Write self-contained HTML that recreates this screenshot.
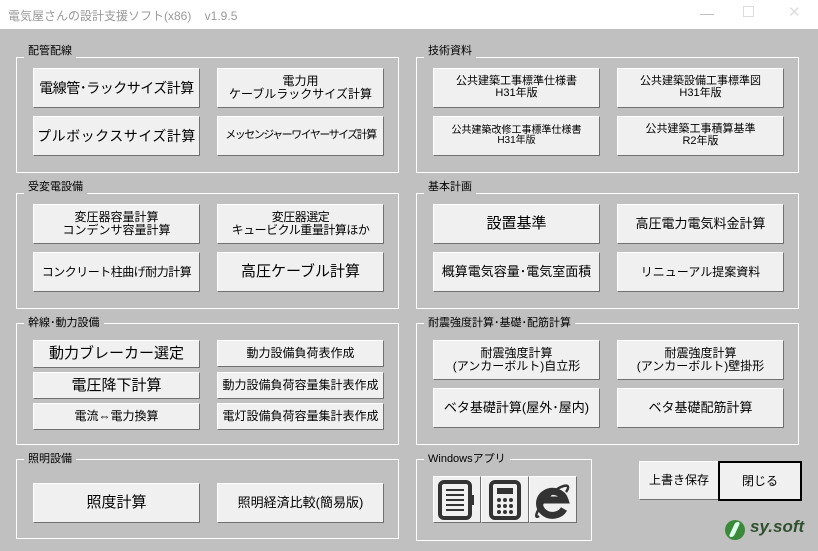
<!DOCTYPE html><html><head><meta charset="utf-8"><style>
body{margin:0;width:818px;height:551px;overflow:hidden;background:#c0c0c0;font-family:"Liberation Sans","Noto Sans CJK JP",sans-serif;position:relative}
.tb{position:absolute;left:0;top:0;width:818px;height:29px;background:#fff;color:#999;font-size:12px}
.g{position:absolute;border:1px solid #fff}
.gl{position:absolute;background:#c0c0c0;font-size:11px;padding:0 4px;color:#000;line-height:14px}
.b{position:absolute;background:#f0f0f0;border:1px solid #fff;border-right-color:#707070;border-bottom-color:#707070;box-sizing:border-box;display:flex;align-items:center;justify-content:center;text-align:center;color:#000;line-height:1.05;white-space:nowrap}
</style></head><body>
<div class="tb"><span style="position:absolute;left:8px;top:7px">電気屋さんの設計支援ソフト(x86)&nbsp;&nbsp;&nbsp;&nbsp;v1.9.5</span>
<span style="position:absolute;left:700px;top:5px;font-size:14px;color:#bbb">—</span>
<span style="position:absolute;left:743px;top:6px;width:9px;height:9px;border:1px solid #ddd"></span>
<span style="position:absolute;left:788px;top:3px;font-size:15px;color:#ddd">✕</span></div>

<div class="g" style="left:16px;top:57px;width:381px;height:114px"></div><div class="gl" style="left:24px;top:44px">配管配線</div>
<div class="b" style="left:33px;top:68px;width:167px;height:40px;font-size:14px;letter-spacing:-0.5px">電線管･ラックサイズ計算</div>
<div class="b" style="left:217px;top:68px;width:167px;height:40px;font-size:12px">電力用<br>ケーブルラックサイズ計算</div>
<div class="b" style="left:33px;top:116px;width:167px;height:40px;font-size:14px;letter-spacing:0.5px">プルボックスサイズ計算</div>
<div class="b" style="left:217px;top:116px;width:167px;height:40px;font-size:11px;letter-spacing:-1.5px">メッセンジャーワイヤーサイズ計算</div>

<div class="g" style="left:416px;top:57px;width:381px;height:114px"></div><div class="gl" style="left:424px;top:44px">技術資料</div>
<div class="b" style="left:433px;top:68px;width:167px;height:40px;font-size:11px">公共建築工事標準仕様書<br>H31年版</div>
<div class="b" style="left:617px;top:68px;width:167px;height:40px;font-size:11px">公共建築設備工事標準図<br>H31年版</div>
<div class="b" style="left:433px;top:116px;width:167px;height:40px;font-size:10px">公共建築改修工事標準仕様書<br>H31年版</div>
<div class="b" style="left:617px;top:116px;width:167px;height:40px;font-size:11px">公共建築工事積算基準<br>R2年版</div>

<div class="g" style="left:16px;top:193px;width:381px;height:114px"></div><div class="gl" style="left:24px;top:180px">受変電設備</div>
<div class="b" style="left:33px;top:204px;width:167px;height:40px;font-size:12px">変圧器容量計算<br>コンデンサ容量計算</div>
<div class="b" style="left:217px;top:204px;width:167px;height:40px;font-size:12px;letter-spacing:-0.5px">変圧器選定<br>キュービクル重量計算ほか</div>
<div class="b" style="left:33px;top:252px;width:167px;height:40px;font-size:12px;letter-spacing:-0.5px">コンクリート柱曲げ耐力計算</div>
<div class="b" style="left:217px;top:252px;width:167px;height:40px;font-size:15px">高圧ケーブル計算</div>

<div class="g" style="left:416px;top:193px;width:381px;height:114px"></div><div class="gl" style="left:424px;top:180px">基本計画</div>
<div class="b" style="left:433px;top:204px;width:167px;height:40px;font-size:15px">設置基準</div>
<div class="b" style="left:617px;top:204px;width:167px;height:40px;font-size:13px">高圧電力電気料金計算</div>
<div class="b" style="left:433px;top:252px;width:167px;height:40px;font-size:13px">概算電気容量･電気室面積</div>
<div class="b" style="left:617px;top:252px;width:167px;height:40px;font-size:12px">リニューアル提案資料</div>

<div class="g" style="left:16px;top:323px;width:381px;height:120px"></div><div class="gl" style="left:24px;top:316px">幹線･動力設備</div>
<div class="b" style="left:33px;top:340px;width:167px;height:28px;font-size:15px">動力ブレーカー選定</div>
<div class="b" style="left:33px;top:372px;width:167px;height:27px;font-size:15px">電圧降下計算</div>
<div class="b" style="left:33px;top:403px;width:167px;height:27px;font-size:12px">電流⇔電力換算</div>
<div class="b" style="left:217px;top:340px;width:167px;height:27px;font-size:12px">動力設備負荷表作成</div>
<div class="b" style="left:217px;top:372px;width:167px;height:27px;font-size:12px">動力設備負荷容量集計表作成</div>
<div class="b" style="left:217px;top:403px;width:167px;height:27px;font-size:12px">電灯設備負荷容量集計表作成</div>

<div class="g" style="left:416px;top:323px;width:381px;height:120px"></div><div class="gl" style="left:424px;top:316px">耐震強度計算･基礎･配筋計算</div>
<div class="b" style="left:433px;top:340px;width:167px;height:40px;font-size:12px">耐震強度計算<br>(アンカーボルト)自立形</div>
<div class="b" style="left:617px;top:340px;width:167px;height:40px;font-size:12px">耐震強度計算<br>(アンカーボルト)壁掛形</div>
<div class="b" style="left:433px;top:388px;width:167px;height:40px;font-size:13px">ベタ基礎計算(屋外･屋内)</div>
<div class="b" style="left:617px;top:388px;width:167px;height:40px;font-size:13px">ベタ基礎配筋計算</div>

<div class="g" style="left:16px;top:459px;width:381px;height:78px"></div><div class="gl" style="left:24px;top:452px">照明設備</div>
<div class="b" style="left:33px;top:483px;width:167px;height:40px;font-size:15px">照度計算</div>
<div class="b" style="left:217px;top:483px;width:167px;height:40px;font-size:13px">照明経済比較(簡易版)</div>

<div class="g" style="left:416px;top:459px;width:174px;height:80px"></div><div class="gl" style="left:424px;top:452px">Windowsアプリ</div>
<div class="b" style="left:433px;top:476px;width:48px;height:47px"><svg width="38" height="40" viewBox="0 0 38 40"><rect x="2" y="2" width="30" height="36" rx="4" fill="none" stroke="#333" stroke-width="4"/><rect x="32" y="15" width="4" height="10" fill="#333"/><path d="M8 10h18M8 15h18M8 20h18M8 25h18M8 30h18" stroke="#333" stroke-width="2"/></svg></div>
<div class="b" style="left:481px;top:476px;width:48px;height:47px"><svg width="32" height="40" viewBox="0 0 32 40"><rect x="2" y="2" width="28" height="36" rx="4" fill="none" stroke="#333" stroke-width="4"/><rect x="8" y="8" width="16" height="6" fill="#333"/><g fill="#333"><circle cx="10" cy="20" r="2"/><circle cx="16" cy="20" r="2"/><circle cx="22" cy="20" r="2"/><circle cx="10" cy="26" r="2"/><circle cx="16" cy="26" r="2"/><circle cx="22" cy="26" r="2"/><circle cx="10" cy="32" r="2"/><circle cx="16" cy="32" r="2"/><circle cx="22" cy="32" r="2"/></g></svg></div>
<div class="b" style="left:529px;top:476px;width:48px;height:47px"><svg width="40" height="40" viewBox="0 0 40 40"><path d="M31 29A13 12 0 1 1 32 20H10" fill="none" stroke="#333" stroke-width="7"/><path d="M6 36C0 40 4 28 16 16S40 2 33 12" fill="none" stroke="#333" stroke-width="2.5"/></svg></div>

<div class="b" style="left:639px;top:461px;width:80px;height:39px;font-size:12px">上書き保存</div>
<div class="b" style="left:718px;top:461px;width:84px;height:40px;font-size:12px;border:2px solid #000">閉じる</div>
<div style="position:absolute;left:725px;top:520px;width:20px;height:20px;border-radius:50%;background:#3a8a3a"></div>
<div style="position:absolute;left:732px;top:522px;width:5px;height:15px;background:#dfe;transform:skewX(-25deg);border-radius:3px"></div>
<div style="position:absolute;left:750px;top:517px;font-size:17px;font-weight:bold;font-style:italic;color:#2f4f2f">sy.soft</div>
</body></html>
